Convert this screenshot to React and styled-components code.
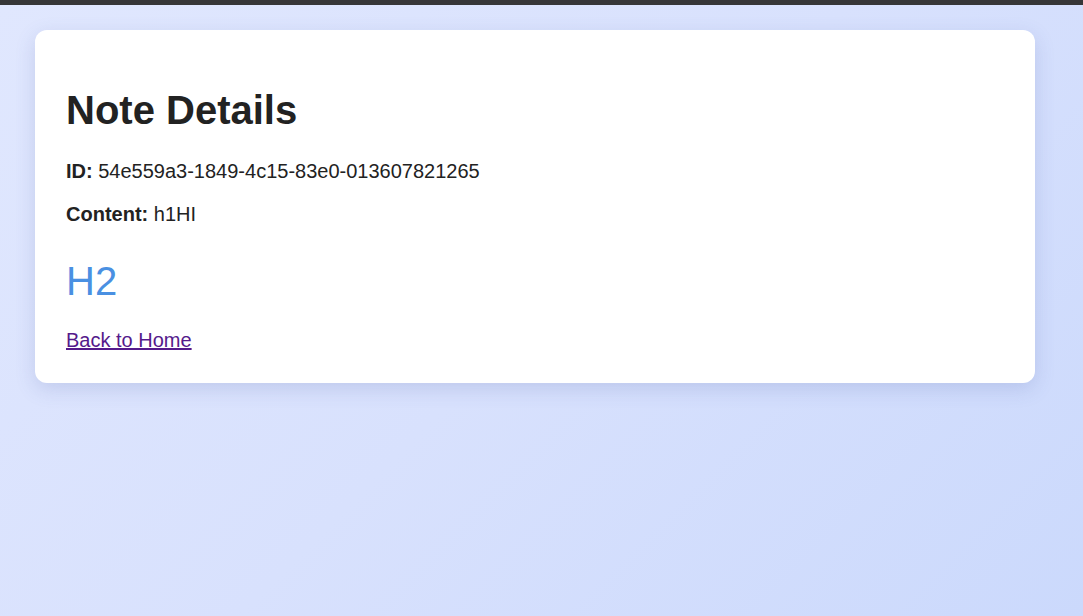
import styled, { createGlobalStyle } from 'styled-components';

const GlobalStyle = createGlobalStyle`
    html, body {
        margin: 0;
        padding: 0;
        height: 100%;
    }

    body {
        font-family: "Liberation Sans", Arial, sans-serif;
        color: #222;
    }

    #root {
        min-height: 100%;
    }
`;

const Page = styled.div`
    min-height: 100vh;
    box-sizing: border-box;
    background: linear-gradient(135deg, #e0e7fe 0%, #d8e1fd 50%, #cbd9fc 100%);
    border-top: 5px solid #363638;
    padding: 25px 48px 40px 35px;
`;

const Card = styled.div`
    width: 1000px;
    box-sizing: border-box;
    background-color: #fff;
    border-radius: 12px;
    padding: 30px 30px 31px 31px;
    box-shadow: 0 6px 20px rgba(70, 90, 160, 0.18);
`;

const Title = styled.h1`
    font-size: 40px;
    font-weight: 700;
    line-height: 46px;
    color: #222;
    margin: 27px 0 27px;
`;

const Field = styled.p`
    font-size: 20px;
    line-height: 23px;
    margin: 0 0 20px;
    color: #222;

    strong {
        font-weight: 700;
    }
`;

const Heading = styled.h2`
    font-size: 40px;
    font-weight: 400;
    line-height: 46px;
    color: #4a90e2;
    margin: 32px 0 25px;
`;

const BackLink = styled.a`
    display: block;
    width: max-content;
    font-size: 20px;
    line-height: 23px;
    color: #551a8b;
    text-decoration: underline;
    cursor: pointer;
`;

const App = () => {
    return <Page>
        <GlobalStyle />
        <Card>
            <Title>Note Details</Title>
            <Field>
                <strong>ID:</strong> 54e559a3-1849-4c15-83e0-013607821265
            </Field>
            <Field>
                <strong>Content:</strong> h1HI
            </Field>
            <Heading>H2</Heading>
            <BackLink href="#">Back to Home</BackLink>
        </Card>
    </Page>;
};

export default App;
